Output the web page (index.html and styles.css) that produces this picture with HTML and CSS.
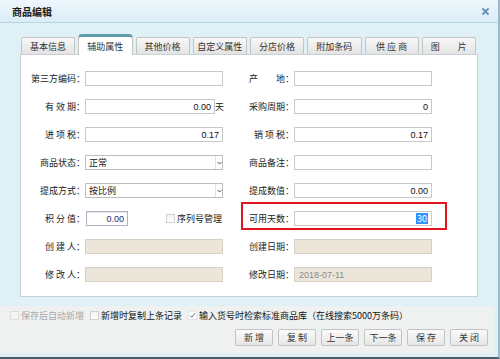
FILE: index.html
```html
<!DOCTYPE html>
<html lang="zh-CN">
<head>
    <meta charset="UTF-8">
    <title>商品编辑</title>
    <link rel="stylesheet" href="styles.css">
</head>
<body>
    <div class="dialog">
        <div class="titlebar">
            <span class="title">商品编辑</span>
            <svg class="close-icon" width="7" height="7" viewBox="0 0 7 7">
                <path d="M1 1L6 6M6 1L1 6" stroke="#5f95bb" stroke-width="1.8" stroke-linecap="round"/>
            </svg>
        </div>

        <div class="dialog-body">
            <div class="tabs">
                <div class="tab">基本信息</div>
                <div class="tab active">辅助属性</div>
                <div class="tab">其他价格</div>
                <div class="tab">自定义属性</div>
                <div class="tab">分店价格</div>
                <div class="tab">附加条码</div>
                <div class="tab">供 应 商</div>
                <div class="tab">图　　片</div>
            </div>

            <div class="panel">
                <div class="form-row">
                    <div class="field field-left">
                        <label class="label">第三方编码：</label>
                        <div class="input"></div>
                    </div>
                    <div class="field field-right">
                        <label class="label">产　　地：</label>
                        <div class="input"></div>
                    </div>
                </div>

                <div class="form-row">
                    <div class="field field-left">
                        <label class="label">有 效 期：</label>
                        <div class="input input-short num">0.00</div>
                        <span class="unit">天</span>
                    </div>
                    <div class="field field-right">
                        <label class="label">采购周期：</label>
                        <div class="input num">0</div>
                    </div>
                </div>

                <div class="form-row">
                    <div class="field field-left">
                        <label class="label">进 项 税：</label>
                        <div class="input num">0.17</div>
                    </div>
                    <div class="field field-right">
                        <label class="label">销 项 税：</label>
                        <div class="input num">0.17</div>
                    </div>
                </div>

                <div class="form-row">
                    <div class="field field-left">
                        <label class="label">商品状态：</label>
                        <div class="select">
                            <span class="select-text">正常</span>
                            <span class="select-arrow">
                                <svg width="5" height="4" viewBox="0 0 5 4"><path d="M0.5 1L2.5 3L4.5 1" fill="none" stroke="#555" stroke-width="1"/></svg>
                            </span>
                        </div>
                    </div>
                    <div class="field field-right">
                        <label class="label">商品备注：</label>
                        <div class="input"></div>
                    </div>
                </div>

                <div class="form-row">
                    <div class="field field-left">
                        <label class="label">提成方式：</label>
                        <div class="select">
                            <span class="select-text">按比例</span>
                            <span class="select-arrow">
                                <svg width="5" height="4" viewBox="0 0 5 4"><path d="M0.5 1L2.5 3L4.5 1" fill="none" stroke="#555" stroke-width="1"/></svg>
                            </span>
                        </div>
                    </div>
                    <div class="field field-right">
                        <label class="label">提成数值：</label>
                        <div class="input num">0.00</div>
                    </div>
                </div>

                <div class="form-row">
                    <div class="field field-left">
                        <label class="label">积 分 值：</label>
                        <div class="input input-tiny num focus">0.00</div>
                        <span class="checkbox-label">
                            <span class="checkbox"></span>序列号管理
                        </span>
                    </div>
                    <div class="field field-right highlight">
                        <label class="label">可用天数：</label>
                        <div class="input num"><span class="selected">30</span></div>
                    </div>
                </div>

                <div class="form-row">
                    <div class="field field-left">
                        <label class="label">创 建 人：</label>
                        <div class="input disabled"></div>
                    </div>
                    <div class="field field-right">
                        <label class="label">创建日期：</label>
                        <div class="input disabled"></div>
                    </div>
                </div>

                <div class="form-row">
                    <div class="field field-left">
                        <label class="label">修 改 人：</label>
                        <div class="input disabled"></div>
                    </div>
                    <div class="field field-right">
                        <label class="label">修改日期：</label>
                        <div class="input disabled">2018-07-11</div>
                    </div>
                </div>
            </div>

            <div class="footer">
                <div class="options">
                    <span class="option muted"><span class="checkbox"></span>保存后自动新增</span>
                    <span class="option"><span class="checkbox"></span>新增时复制上条记录</span>
                    <span class="option">
                        <span class="checkbox checked">
                            <svg width="9" height="9" viewBox="0 0 9 9"><path d="M1.5 4.5L3.5 6.8L7.5 1.5" fill="none" stroke="#666" stroke-width="1.2"/></svg>
                        </span>输入货号时检索标准商品库（在线搜索5000万条码）
                    </span>
                </div>
                <div class="buttons">
                    <button class="btn">新 增</button>
                    <button class="btn">复 制</button>
                    <button class="btn">上一条</button>
                    <button class="btn">下一条</button>
                    <button class="btn">保 存</button>
                    <button class="btn">关 闭</button>
                </div>
            </div>
        </div>
    </div>
</body>
</html>
```

FILE: styles.css
```css
:root {
    --body-bg: #dff0f7;
    --panel-border: #c9cfd2;
    --input-border: #c8c8c8;
    --disabled-bg: #ece6da;
    --text: #222;
}

* {
    margin: 0;
    padding: 0;
    box-sizing: border-box;
    font-family: "Noto Sans CJK SC", "Liberation Sans", sans-serif;
}

body {
    width: 500px;
    height: 359px;
    overflow: hidden;
    background-color: #fff;
    color: var(--text);
    font-size: 9px;
}

.dialog {
    width: 500px;
    height: 359px;
    background-color: var(--body-bg);
    border-right: 2px solid #9fb8c6;
    border-bottom: 2px solid #4d5d68;
    display: flex;
    flex-direction: column;
}

.titlebar {
    height: 23px;
    flex-shrink: 0;
    display: flex;
    align-items: center;
    justify-content: space-between;
    padding: 0 9px 0 12px;
    background: linear-gradient(#eef7fc, #dbecf5);
    border-bottom: 1px solid #b9d5e3;
}

.title {
    font-size: 10px;
    font-weight: bold;
    color: #1c1c1c;
}

.close-icon {
    display: block;
}

.dialog-body {
    flex: 1;
    display: flex;
    flex-direction: column;
    padding-top: 11px;
}

/* tabs */
.tabs {
    display: flex;
    align-items: flex-end;
    gap: 3px;
    height: 20px;
    margin: 0 22px 0 21px;
    position: relative;
    z-index: 1;
}

.tab {
    flex: 1;
    height: 17px;
    display: flex;
    align-items: center;
    justify-content: center;
    color: #333;
    background: linear-gradient(#f8f8f8, #e3e3e3);
    border: 1px solid #c4c4c4;
    border-bottom: none;
    border-radius: 2px 2px 0 0;
}

.tab.active {
    height: 21px;
    margin-bottom: -1px;
    background: #fff;
    border-top: 3px solid #5f9ea6;
    border-radius: 4px 4px 0 0;
    padding-top: 1px;
}

/* panel */
.panel {
    width: 458px;
    height: 243px;
    margin-left: 20px;
    background-color: #fff;
    border: 1px solid var(--panel-border);
    padding-top: 16px;
    display: flex;
    flex-direction: column;
    gap: 13px;
}

.form-row {
    display: flex;
    height: 15px;
}

.field {
    display: flex;
    align-items: center;
    height: 15px;
}

.field-left {
    width: 202px;
    margin-right: 20px;
}

.field-right {
    width: 189px;
}

.field-left .label {
    width: 64px;
}

.field-right .label {
    width: 51px;
}

.label {
    flex-shrink: 0;
    text-align: right;
    white-space: nowrap;
    color: #222;
    padding-right: 0;
}

.input {
    width: 138px;
    height: 15px;
    flex-shrink: 0;
    border: 1px solid var(--input-border);
    background-color: #fff;
    display: flex;
    align-items: center;
    padding: 0 3px;
    white-space: nowrap;
    overflow: hidden;
}

.input.num {
    justify-content: flex-end;
    font-family: "Liberation Sans", "Noto Sans CJK SC", sans-serif;
    color: #111;
}

.input-short {
    width: 130px;
}

.input-tiny {
    width: 42px;
    margin-left: 1px;
}

.input.focus {
    border-color: #a9b4c0;
    box-shadow: inset 0 1px 1px rgba(0, 0, 0, 0.1);
}

.input.focus.num {
    color: #1b2c70;
}

.input.disabled {
    background-color: var(--disabled-bg);
    border-color: #d6d1c4;
    color: #8a8a8a;
    font-family: "Liberation Sans", sans-serif;
    padding-left: 4px;
}

.unit {
    margin-left: 0;
}

.selected {
    background-color: #3390ff;
    color: #fff;
    padding: 0 1px;
    line-height: 11px;
}

.select {
    width: 138px;
    height: 15px;
    flex-shrink: 0;
    border: 1px solid #bdbdbd;
    background-color: #fff;
    display: flex;
    align-items: center;
    justify-content: space-between;
    padding-left: 3px;
}

.select-arrow {
    width: 7px;
    height: 13px;
    border-left: 1px solid #e1e1e1;
    display: flex;
    align-items: center;
    justify-content: center;
}

.checkbox-label {
    display: flex;
    align-items: center;
    margin-left: 38px;
    white-space: nowrap;
}

.checkbox {
    width: 9px;
    height: 9px;
    border: 1px solid #cfcfcf;
    background: linear-gradient(#f2f2f2, #fff);
    margin-right: 2px;
    display: inline-flex;
    align-items: center;
    justify-content: center;
    flex-shrink: 0;
}

.checkbox.checked {
    border-color: #e6e6e6;
    background: #fff;
}

.highlight {
    position: relative;
}

.highlight::after {
    content: "";
    position: absolute;
    top: -9px;
    bottom: -4px;
    left: -2px;
    right: -15px;
    border: 2px solid #e3141c;
}

/* footer */
.footer {
    margin-top: 9px;
    margin-right: 5px;
    padding: 2px 5px 7px 10px;
    background-color: #eff1f1;
}

.options {
    display: flex;
    align-items: center;
    gap: 6px;
    height: 14px;
}

.option {
    display: flex;
    align-items: center;
    white-space: nowrap;
    color: #111;
}

.option.muted {
    color: #a8a8a8;
}

.option.muted .checkbox {
    border-color: #dedede;
    background: #f3f3f3;
}

.buttons {
    display: flex;
    justify-content: flex-end;
    gap: 5px;
    margin-top: 7px;
}

.btn {
    width: 38px;
    height: 17px;
    font-size: 9px;
    color: #333;
    background: linear-gradient(#fbfbfb, #e6e6e6);
    border: 1px solid #c3c3c3;
    border-radius: 2px;
    cursor: pointer;
}
```
